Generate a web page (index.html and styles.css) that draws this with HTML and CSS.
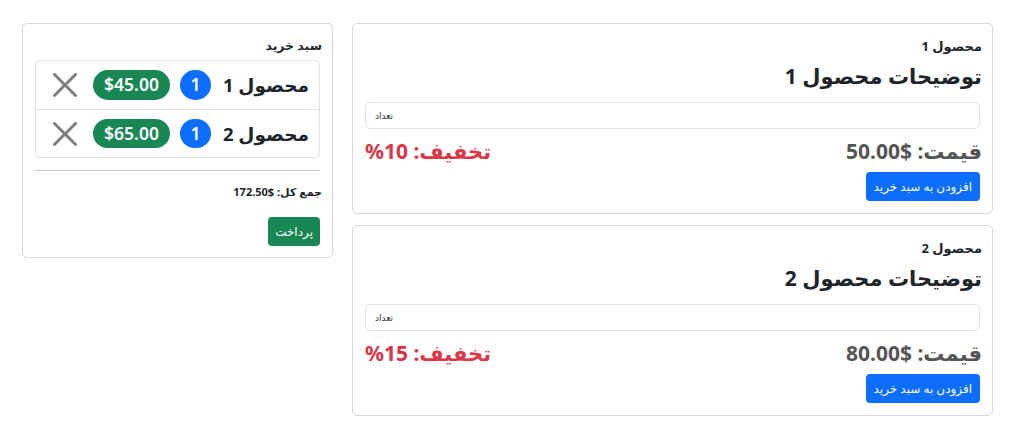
FILE: index.html
```html
<!DOCTYPE html>
<html lang="fa" dir="rtl">
<head>
<meta charset="utf-8">
<title>فروشگاه</title>
<link rel="stylesheet" href="styles.css">
</head>
<body>
<div class="page">
  <div class="products">
    <div class="card product">
      <div class="card-title">محصول 1</div>
      <div class="desc">توضیحات محصول 1</div>
      <input class="qty" type="number" placeholder="تعداد">
      <div class="price-row">
        <span class="price">قیمت: $50.00</span>
        <span class="discount">تخفیف: 10%</span>
      </div>
      <div class="actions"><button class="btn btn-primary">افزودن به سبد خرید</button></div>
    </div>
    <div class="card product">
      <div class="card-title">محصول 2</div>
      <div class="desc">توضیحات محصول 2</div>
      <input class="qty" type="number" placeholder="تعداد">
      <div class="price-row">
        <span class="price">قیمت: $80.00</span>
        <span class="discount">تخفیف: 15%</span>
      </div>
      <div class="actions"><button class="btn btn-primary">افزودن به سبد خرید</button></div>
    </div>
  </div>
  <div class="card cart">
    <div class="card-title">سبد خرید</div>
    <ul class="list-group">
      <li class="list-item">
        <span class="item-name">محصول 1</span>
        <span class="badge badge-blue">1</span>
        <span class="badge badge-green">$45.00</span>
        <button class="btn-close" aria-label="حذف"><svg viewBox="0 0 16 16" width="24" height="24"><path d="M.293.293a1 1 0 0 1 1.414 0L8 6.586 14.293.293a1 1 0 1 1 1.414 1.414L9.414 8l6.293 6.293a1 1 0 0 1-1.414 1.414L8 9.414l-6.293 6.293a1 1 0 0 1-1.414-1.414L6.586 8 .293 1.707a1 1 0 0 1 0-1.414z"/></svg></button>
      </li>
      <li class="list-item">
        <span class="item-name">محصول 2</span>
        <span class="badge badge-blue">1</span>
        <span class="badge badge-green">$65.00</span>
        <button class="btn-close" aria-label="حذف"><svg viewBox="0 0 16 16" width="24" height="24"><path d="M.293.293a1 1 0 0 1 1.414 0L8 6.586 14.293.293a1 1 0 1 1 1.414 1.414L9.414 8l6.293 6.293a1 1 0 0 1-1.414 1.414L8 9.414l-6.293 6.293a1 1 0 0 1-1.414-1.414L6.586 8 .293 1.707a1 1 0 0 1 0-1.414z"/></svg></button>
      </li>
    </ul>
    <hr class="divider">
    <div class="total">جمع کل: $172.50</div>
    <div class="actions"><button class="btn btn-success">پرداخت</button></div>
  </div>
</div>
</body>
</html>
```
FILE: styles.css
```css
* { box-sizing: border-box; }
html, body { margin: 0; padding: 0; background: #fff; }
body {
  font-family: "Segoe UI", "Noto Sans", "DejaVu Sans", sans-serif;
  color: #212529;
  font-size: 16px;
}
.page {
  display: flex;
  align-items: flex-start;
  gap: 19px;
  padding: 23px 19px 0 22px;
}
.products {
  flex: 1;
  display: flex;
  flex-direction: column;
  gap: 11px;
}
.card {
  border: 1px solid #d6d8da;
  border-radius: 5px;
  padding: 12px 10px 12px 12px;
  background: #fff;
}
.cart { width: 311px; flex: 0 0 311px; padding-bottom: 11px; }
.card-title {
  font-size: 13px;
  font-weight: 700;
  line-height: 20px;
}
.product .card-title { margin-bottom: 6px; }
.desc {
  font-size: 21px;
  font-weight: 700;
  line-height: 28px;
  margin-bottom: 12px;
}
.qty {
  display: block;
  width: calc(100% - 2px);
  height: 27px;
  border: 1px solid #dee2e6;
  border-radius: 5px;
  padding: 0 9px;
  direction: ltr;
  text-align: left;
  font-family: inherit;
  font-size: 9px;
  margin: 0 2px 10px 0;
  -moz-appearance: textfield;
}
.qty::placeholder { color: #333; }
.qty::-webkit-inner-spin-button { -webkit-appearance: none; }
.price-row {
  display: flex;
  justify-content: space-between;
  align-items: center;
  line-height: 26px;
  font-size: 21px;
  font-weight: 700;
  margin-bottom: 8px;
  margin-top: -1px;
}
.price { color: #555; }
.discount { color: #dc3545; }
.actions { display: flex; padding-right: 2px; }
.btn {
  border: 0;
  border-radius: 4px;
  color: #fff;
  font-family: inherit;
  font-size: 12px;
  padding: 0 8px;
  height: 29px;
  cursor: pointer;
}
.btn-primary { background: #0d6efd; }
.btn-success { background: #198754; height: 29px; padding: 0 7px; }
.cart .card-title { margin-bottom: 4px; font-size: 12.5px; }
.cart .list-group { margin-right: 2px; }
.list-group {
  list-style: none;
  margin: 0;
  padding: 0;
  border: 1px solid #dee2e6;
  border-radius: 5px;
}
.list-item {
  display: flex;
  align-items: center;
  gap: 10px;
  padding: 8px 10px 8px 16px;
  height: 48px;
}
.list-item + .list-item { border-top: 1px solid #dee2e6; }
.item-name {
  font-size: 18.5px;
  font-weight: 700;
  line-height: 32px;
  white-space: nowrap;
  margin-left: 2px;
}
.badge {
  display: inline-block;
  color: #fff;
  font-size: 17.5px;
  font-weight: 600;
  line-height: 1;
  padding: 6px 11px;
  border-radius: 50rem;
}
.badge-blue { background: #0d6efd; padding: 6px 10.5px; }
.badge-green { background: #198754; }
.btn-close {
  margin-right: 6px;
  border: 0;
  background: transparent;
  padding: 0;
  width: 26px;
  height: 26px;
  display: flex;
  align-items: center;
  justify-content: center;
  opacity: 0.5;
}
.btn-close svg { fill: #000; display: block; }
.divider {
  border: 0;
  border-top: 1px solid #c8c9ca;
  margin: 12px 2px 12px 0;
}
.total {
  font-size: 11px;
  font-weight: 700;
  line-height: 18px;
  margin-bottom: 16px;
}
```
